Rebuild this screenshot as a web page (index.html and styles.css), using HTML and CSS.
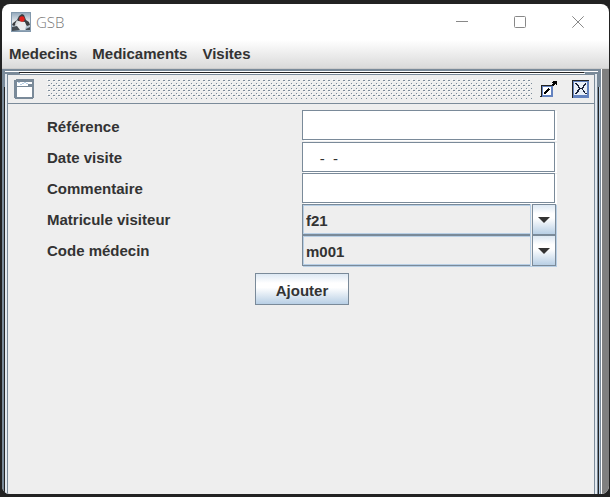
FILE: index.html
```html
<!DOCTYPE html>
<html lang="fr">
<head>
<meta charset="utf-8">
<title>GSB</title>
<link rel="stylesheet" href="styles.css">
</head>
<body>
<div class="window">
  <header class="titlebar">
    <svg class="logo" viewBox="0 0 20 20" aria-hidden="true">
      <defs><linearGradient id="sky" x1="0" y1="0" x2="0" y2="1"><stop offset="0" stop-color="#8da3b8"/><stop offset=".5" stop-color="#e6ebef"/><stop offset="1" stop-color="#8399ad"/></linearGradient></defs>
      <rect width="20" height="20" fill="url(#sky)"/>
      <path d="M.5.5h19v19H.5z" fill="none" stroke="#8298ac"/>
      <path d="M11 2L8 4 6 8l-4 3-1 2 2 1 4-3h7l2 3 3-1-1-3-3-2-2-5z" fill="#3a3d40"/>
      <path d="M7 9l7 1 1 4-1 4H8l-3-3z" fill="#e9ebed"/>
      <path d="M6 8l-2 4 1 2 3-4z" fill="#d9dde0"/>
      <circle cx="11" cy="7" r="2.700" fill="#e3201c"/>
      <path d="M1 15l5-1 3 4-8 1zM15 17l4-2v3h-4z" fill="#454c53"/>
    </svg>
    <span class="title">GSB</span>
    <div class="controls">
      <button type="button" aria-label="Réduire"><svg viewBox="0 0 12 12"><path d="M0 5.500h12"/></svg></button>
      <button type="button" aria-label="Agrandir"><svg viewBox="0 0 12 12"><rect x=".5" y=".5" width="11" height="11" rx="1"/></svg></button>
      <button type="button" aria-label="Fermer"><svg viewBox="0 0 12 12"><path d="M.3.3l11.400 11.400M11.700.3L.3 11.700"/></svg></button>
    </div>
  </header>
  <nav class="menubar">
    <button type="button">Medecins</button>
    <button type="button">Medicaments</button>
    <button type="button">Visites</button>
  </nav>
  <main class="desktop">
    <section class="frame">
      <div class="pane">
        <div class="frame-bar">
          <svg class="frame-icon" viewBox="0 0 20 20" shape-rendering="crispEdges" aria-hidden="true">
            <path d="M2 0h18v19h-1v1H1v-1H0V1h2z" fill="#7a8a99"/>
            <path d="M3 3h15v3H3zM3 8h15v10H3z" fill="#fff"/>
            <path d="M4 3h2v1H4zM8 4h2v1H8zM12 4h2v1h-2zM6 5h2v1H6zM10 3h2v1h-2z" fill="#b8cfe5"/>
            <path d="M14 5h4v1h-4z" fill="#7a8a99"/>
            <path d="M3 6h11v1H3z" fill="#fff"/>
          </svg>
          <div class="bumps"></div>
          <button type="button" class="tool maximize" aria-label="Agrandir la fenêtre">
            <svg viewBox="0 0 18 18" shape-rendering="crispEdges">
              <path d="M1 5h12v12H1z" fill="#6382bf"/><path d="M1 5h12v1H2v11H0v-1h1z" fill="#222"/>
              <path d="M3 7h8v8H3z" fill="#fff"/>
              <path d="M4 12h1v-1h1v-1h1V9h1V8h1v1h1v1H9v1H8v1H7v1H6v1H4zM12 4h1V3h-1V2h1V1h4v4h-1V4h-1v1h-1v1h-1V5h-1z" fill="#000"/>
            </svg>
          </button>
          <button type="button" class="tool" aria-label="Fermer la fenêtre">
            <svg viewBox="0 0 18 18" shape-rendering="crispEdges">
              <path d="M1 1h16v17H0V1z" fill="#6382bf"/><path d="M0 0h17v1H1v17H0z" fill="#222"/>
              <path d="M2 2h13v13H2z" fill="#e9eff8"/>
              <path d="M3 3h2v1h1v1h1v2h1v1h2V7h1V5h1V4h1V3h1v2h-1v1h-1v2h-1v2h1v1h1v2h2v1h-2v-1h-1v-1h-1v-2h-1v-1H8v1H7v2H6v1H5v1H3v-1h1v-1h1v-2h1v-1h1V8H6V6H5V5H4V4H3z" fill="#17203a"/>
            </svg>
          </button>
        </div>
        <form class="form">
          <div class="fields">
            <label for="reference">Référence</label>
            <input id="reference" type="text">
            <label for="date">Date visite</label>
            <input id="date" class="masked" type="text" value="    -  -    ">
            <label for="commentaire">Commentaire</label>
            <input id="commentaire" type="text">
            <label for="matricule">Matricule visiteur</label>
            <div class="combo"><select id="matricule"><option>f21</option></select><span class="arrow"></span></div>
            <label for="medecin">Code médecin</label>
            <div class="combo"><select id="medecin"><option>m001</option></select><span class="arrow"></span></div>
          </div>
          <button type="button" class="submit">Ajouter</button>
        </form>
      </div>
    </section>
  </main>
</div>
</body>
</html>
```

FILE: styles.css
```css
* {
  box-sizing: border-box;
}

:root {
  --slate: #7a8a99;
  --face: #eee;
  --ink: #333;
  --pale: #b8cfe5;
}

body {
  margin: 0;
  height: 100vh;
  padding: 4px 1px 3px 2px;
  background: #222;
  color: var(--ink);
  font: bold 15px/20px "Liberation Sans", Arial, sans-serif;
}

button,
input,
select {
  margin: 0;
  font: inherit;
  color: inherit;
  border-radius: 0;
}

svg {
  display: block;
}

.window {
  height: 100%;
  display: flex;
  flex-direction: column;
  overflow: hidden;
  border-radius: 8px;
  background: #fff;
}

.titlebar {
  display: flex;
  flex: none;
  align-items: center;
  height: 36px;
  padding: 0 2px 0 9px;
}

.logo {
  width: 20px;
  height: 20px;
}

.title {
  margin-left: 5px;
  color: #777;
  font: 300 15px/20px "Open Sans", sans-serif;
}

.controls {
  display: flex;
  margin-left: auto;
}

.controls button {
  display: grid;
  place-items: center;
  width: 58px;
  height: 36px;
  padding: 0;
  border: 0;
  background: none;
}

.controls svg {
  width: 12px;
  height: 12px;
  fill: none;
  stroke: #888;
}

.menubar {
  display: flex;
  flex: none;
  gap: 15px;
  height: 29px;
  padding: 0 7px;
  border-bottom: 1px solid #ccc;
  background: linear-gradient(#fff, #dadada);
}

.menubar button {
  padding: 0;
  border: 0;
  background: none;
}

.desktop {
  display: flex;
  flex: 1;
  min-height: 0;
  padding-right: 7px;
  background: #808080;
}

/* Bevelled frame: grip lines drawn over layered borders */
.frame {
  flex: 1;
  padding: 5px 6px 0 5px;
  border-right: 1px solid #fff;
  background:
    linear-gradient(#222, #222) 17px 3px / calc(100% - 34px) 1px no-repeat,
    linear-gradient(#222, #222) 2px 18px / 1px 100% no-repeat,
    linear-gradient(#222, #222) calc(100% - 2px) 18px / 1px 100% no-repeat,
    linear-gradient(#fff, #fff) 3px 2px / calc(100% - 6px) 1px no-repeat,
    linear-gradient(#fff, #fff) 18px 4px / calc(100% - 34px) 1px no-repeat,
    linear-gradient(#e3e9ef, #e3e9ef) 3px 5px / 2px 100% no-repeat,
    linear-gradient(#e3e9ef, #e3e9ef) calc(100% - 4px) 5px / 2px 100% no-repeat,
    linear-gradient(#b8cfe5, #b8cfe5) calc(100% - 1px) 18px / 1px 100% no-repeat,
    var(--slate);
}

.pane {
  height: 100%;
  border: 1px solid var(--slate);
  border-bottom: 0;
  background: var(--face);
}

.frame-bar {
  display: flex;
  align-items: center;
  height: 29px;
  padding: 0 4px 0 6px;
  border-bottom: 1px solid var(--slate);
}

.frame-icon {
  width: 20px;
  height: 20px;
}

.bumps {
  flex: 1;
  height: 20px;
  margin: 0 8px 0 13px;
  background:
    conic-gradient(from 270deg at 1px 1px, #fff 90deg, transparent 0) 0 0 / 5px 5px,
    conic-gradient(from 270deg at 1px 1px, #fff 90deg, transparent 0) 2px 2px / 5px 5px,
    conic-gradient(from 270deg at 2px 1px, var(--slate) 90deg, transparent 0) 1px 1px / 5px 5px,
    conic-gradient(from 270deg at 1px 1px, var(--slate) 90deg, transparent 0) 4px 4px / 5px 5px;
}

.tool {
  padding: 0;
  border: 0;
  background: none;
}

.tool svg {
  width: 18px;
  height: 18px;
}

.maximize {
  margin-right: 14px;
}

.form {
  padding: 6px 37px 0 39px;
}

.fields {
  display: grid;
  grid-template-columns: 255px 1fr;
  grid-template-rows: 32px repeat(4, 31px);
}

.fields label {
  align-self: center;
  padding-top: 1px;
}

.fields input {
  width: calc(100% - 2px);
  min-width: 0;
  height: 30px;
  padding: 0 3px;
  border: 1px solid var(--slate);
  outline: 0;
  background: #fff;
  box-shadow: 2px 1px #fff;
}

.fields .masked {
  padding: 2px 0 0;
  font-weight: normal;
  white-space: pre;
}

.combo {
  position: relative;
  height: 31px;
  margin-right: 1px;
  box-shadow: 1px 1px var(--pale);
}

.combo select {
  display: block;
  appearance: none;
  width: 100%;
  height: 100%;
  padding: 2px 28px 0 3px;
  border: 1px solid var(--slate);
  outline: 0;
  background: var(--face);
  box-shadow: inset 1px 1px var(--pale), inset 0 -1px var(--pale);
}

.arrow {
  position: absolute;
  top: 0;
  right: 0;
  bottom: 0;
  display: grid;
  place-items: center;
  width: 24px;
  border: 1px solid var(--slate);
  background: linear-gradient(#dde8f3, #fff 30%, #fff 45%, var(--pale));
  box-shadow: -1px 0 var(--face), -2px 0 var(--pale);
  pointer-events: none;
}

.arrow::before {
  content: "";
  border: 6px solid transparent;
  border-top-color: var(--ink);
  border-bottom: 0;
}

.submit {
  display: block;
  width: 94px;
  height: 32px;
  margin: 7px auto 0;
  padding: 3px 0 0;
  border: 1px solid var(--slate);
  background: linear-gradient(#dde8f3, #fff 30%, #fff 45%, var(--pale));
}
```
